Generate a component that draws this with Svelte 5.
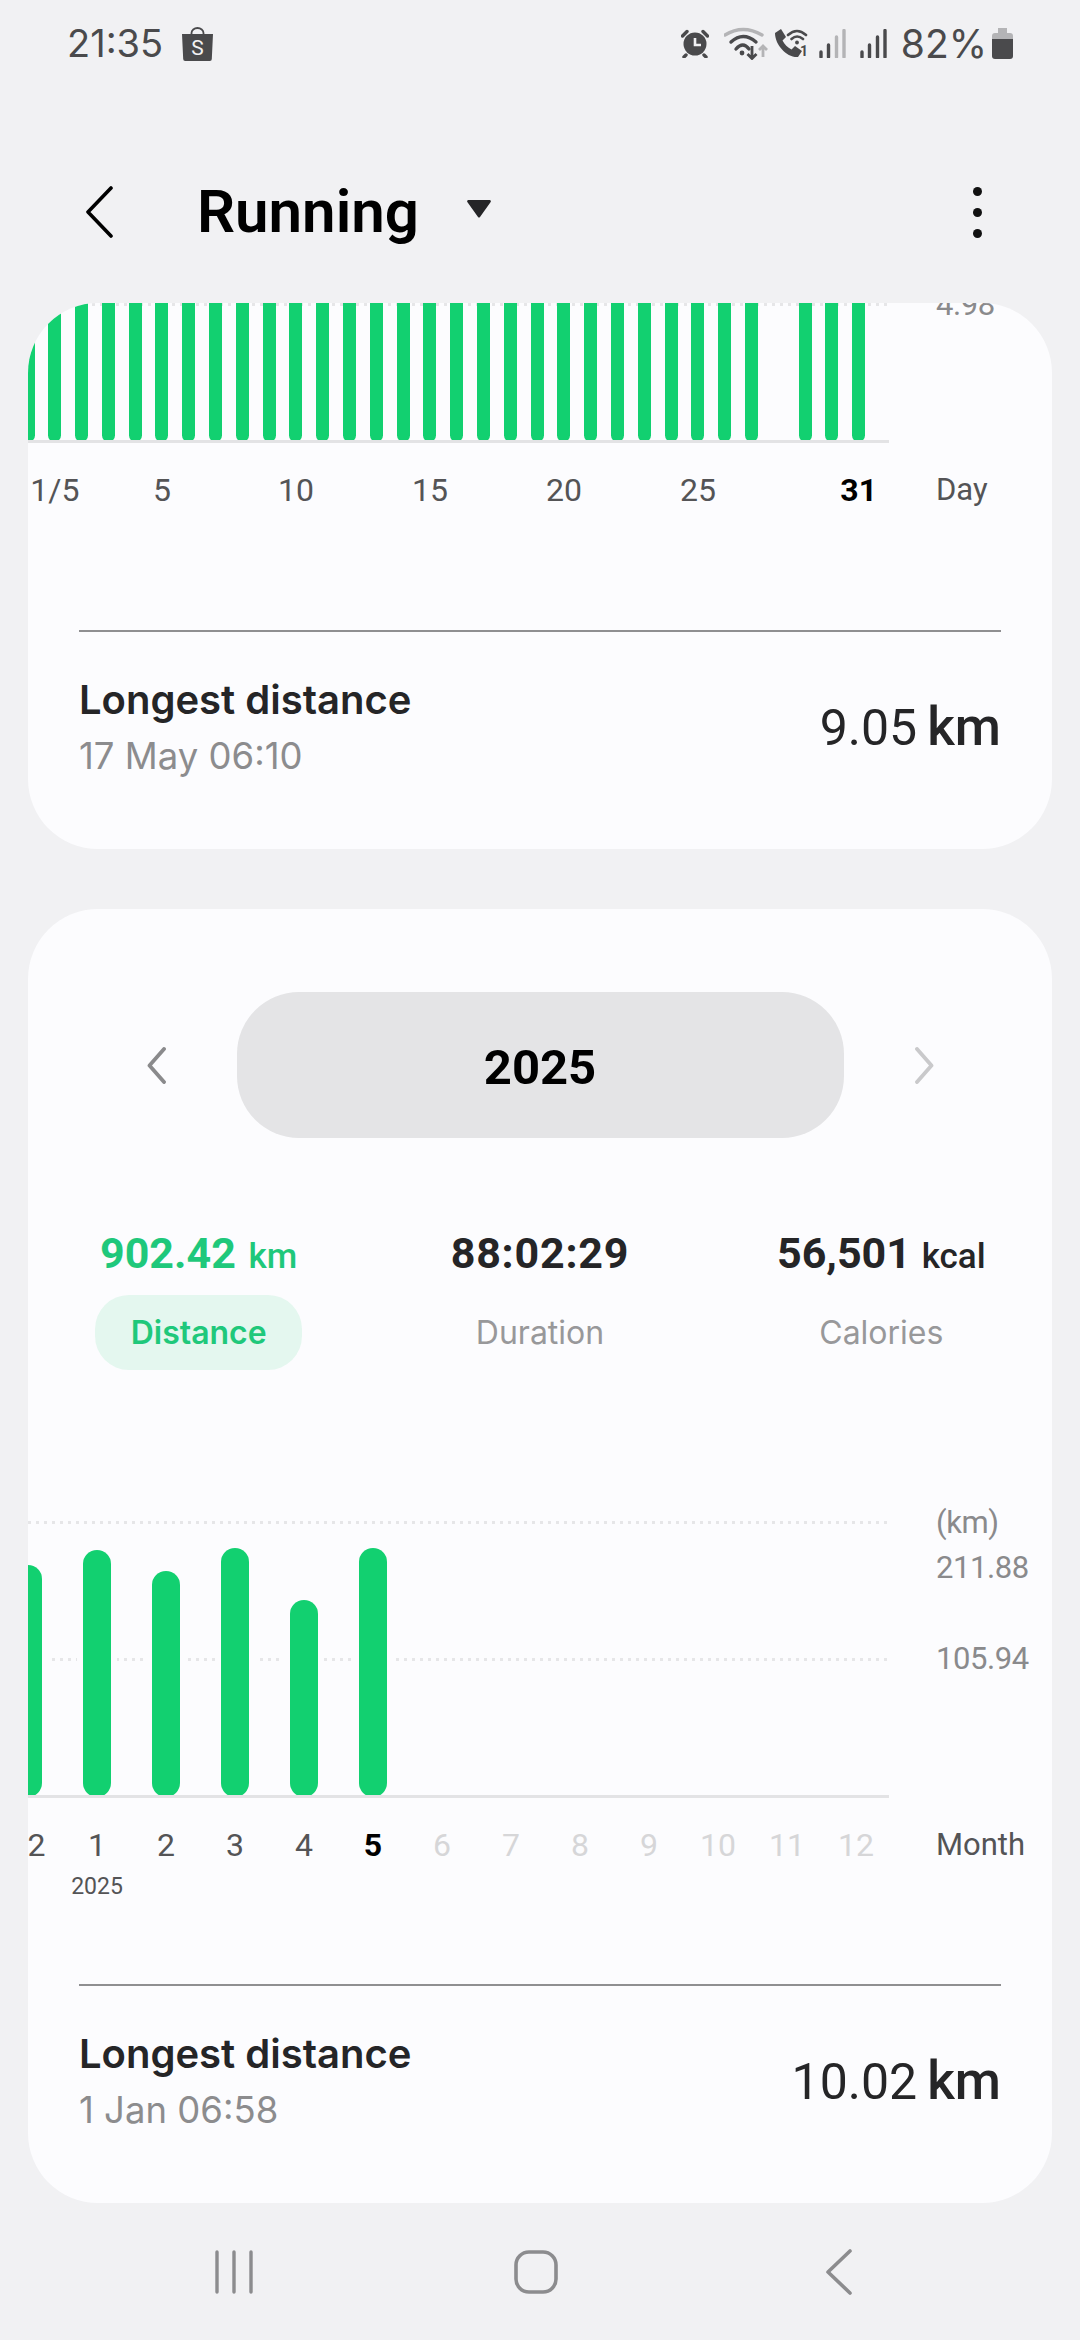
<script>
    // bar heights are px above the baseline, day 0 is the tail of the previous month
    const missingDays = [28];
    const dayLabels = { 1: "1/5", 5: "5", 10: "10", 15: "15", 20: "20", 25: "25", 31: "31" };
    const days = Array.from({ length: 32 }, (_, i) => ({
        i,
        label: dayLabels[i] ?? "",
        empty: missingDays.includes(i),
    }));

    const months = [
        { label: "2", height: 232, first: true },
        { label: "1", height: 247, year: "2025" },
        { label: "2", height: 226 },
        { label: "3", height: 249 },
        { label: "4", height: 197 },
        { label: "5", height: 249, current: true },
        ...[6, 7, 8, 9, 10, 11, 12].map((m) => ({ label: String(m), height: 0, future: true })),
    ];
</script>

<div class="screen">
    <div class="status">
        <span class="time">21:35</span>
        <svg class="bag" width="31" height="34" viewBox="0 0 31 34">
            <path d="M9.500 9V6a6 5 0 0 1 12 0v3" fill="none" stroke="#4a4a4c" stroke-width="1.800" />
            <path d="M0 7h31l-1.200 25a2 2 0 0 1-2 2H3.200a2 2 0 0 1-2-2z" fill="#4a4a4c" />
            <text x="15.500" y="28" text-anchor="middle" font-size="21" font-family="Roboto, sans-serif" fill="#f1f1f3">S</text>
        </svg>
        <div class="status-right">
            <svg width="28" height="29" viewBox="0 0 28 29">
                <circle cx="14" cy="15" r="11.500" fill="#4a4a4c" />
                <path d="M14 9v7h6" fill="none" stroke="#f1f1f3" stroke-width="2.600" />
                <path d="M1.500 7 6 2.500M26.500 7 22 2.500M5 26l-2 2M23 26l2 2" stroke="#4a4a4c" stroke-width="3.400" stroke-linecap="round" />
            </svg>
            <svg class="wifi" width="45" height="33" viewBox="0 0 45 33">
                <path d="M1 8Q19-3 38 8" fill="none" stroke="#b4b4b6" stroke-width="3.400" stroke-linecap="round" />
                <path d="M7 15Q19 4 32 15M12 22Q19 14 25 22" fill="none" stroke="#4a4a4c" stroke-width="3.400" stroke-linecap="round" />
                <circle cx="18" cy="26" r="2.400" fill="#4a4a4c" />
                <path d="M28 19v12M23.500 27l4.500 4.500 4.500-4.500" fill="none" stroke="#4a4a4c" stroke-width="2.800" />
                <path d="M39 30V19M35 23l4-4 4 4" fill="none" stroke="#b4b4b6" stroke-width="2.800" />
            </svg>
            <svg class="call" width="36" height="34" viewBox="0 0 36 34">
                <path d="M2 7 8 3l5 8-3.500 3.500c2 4 5 7 9 9l3.500-3.500 7 5-4 6C14 32 2 19 2 7z" fill="#4a4a4c" />
                <path d="M15 9Q24 1 33 9M18.500 13Q24 8 30 13" fill="none" stroke="#4a4a4c" stroke-width="2.600" stroke-linecap="round" />
                <circle cx="24" cy="16.500" r="1.900" fill="#4a4a4c" />
                <text x="31" y="30" text-anchor="middle" font-size="14" font-weight="700" font-family="Roboto, sans-serif" fill="#4a4a4c">1</text>
            </svg>
            <svg class="signal" width="27" height="29" viewBox="0 0 27 29">
                <path d="M2 23v5M9.500 16v12" stroke="#4a4a4c" stroke-width="3.400" stroke-linecap="round" />
                <path d="M17.500 8v20M25 1.500V28" stroke="#b4b4b6" stroke-width="3.400" stroke-linecap="round" />
            </svg>
            <svg class="signal second" width="27" height="29" viewBox="0 0 27 29">
                <path d="M2 23v5M9.500 16v12M17.500 8v20M25 1.500V28" stroke="#4a4a4c" stroke-width="3.400" stroke-linecap="round" />
            </svg>
            <span class="pct">82%</span>
            <svg class="battery" width="21" height="31" viewBox="0 0 21 31">
                <path d="M6 0h9v5h3a3 3 0 0 1 3 3v3H0V8a3 3 0 0 1 3-3h3z" fill="#b4b4b6" />
                <path d="M0 11h21v17a3 3 0 0 1-3 3H3a3 3 0 0 1-3-3z" fill="#4a4a4c" />
            </svg>
        </div>
    </div>

    <header class="topbar">
        <svg class="back" width="27" height="52" viewBox="0 0 27 52">
            <path d="M25 2 2 26l23 24" fill="none" stroke="#000" stroke-width="3.600" stroke-linecap="round" stroke-linejoin="round" />
        </svg>
        <h1>Running</h1>
        <svg class="caret" width="24" height="18" viewBox="0 0 24 18">
            <path d="M1.500 0h21a1.300 1.300 0 0 1 1 2.200L13 17a1.300 1.300 0 0 1-2 0L.5 2.200A1.300 1.300 0 0 1 1.500 0z" fill="#252527" />
        </svg>
        <div class="kebab"><i></i><i></i><i></i></div>
    </header>

    <main class="cards">
        <section class="card monthly">
            <div class="chart">
                <div class="plot">
                    <div class="grid-line top-line"></div>
                    <div class="slots day-slots">
                        {#each days as d}
                            <div class="slot">
                                {#if !d.empty}<div class="bar day-bar"></div>{/if}
                            </div>
                        {/each}
                    </div>
                    <div class="baseline"></div>
                </div>
                <div class="y-axis"><span class="y-label clipped">4.98</span></div>
                <div class="slots ticks day-slots">
                    {#each days as d}
                        <div class="slot tick" class:current={d.i === 31}>{d.label}</div>
                    {/each}
                </div>
                <div class="unit">Day</div>
            </div>
            <div class="footer">
                <div>
                    <div class="f-title">Longest distance</div>
                    <div class="f-sub">17 May 06:10</div>
                </div>
                <div class="f-value">9.05<b>km</b></div>
            </div>
        </section>

        <section class="card yearly">
            <div class="year-nav">
                <svg width="19" height="37" viewBox="0 0 19 37">
                    <path d="M17 2 2.500 18.500 17 35" fill="none" stroke="#8a8a8c" stroke-width="3.800" stroke-linecap="round" stroke-linejoin="round" />
                </svg>
                <div class="year-pill">2025</div>
                <svg width="19" height="37" viewBox="0 0 19 37">
                    <path d="M2 2 16.500 18.500 2 35" fill="none" stroke="#c9c9cb" stroke-width="3.800" stroke-linecap="round" stroke-linejoin="round" />
                </svg>
            </div>

            <div class="stats">
                <div class="stat active">
                    <div class="stat-value">902.42 <small>km</small></div>
                    <div class="stat-label">Distance</div>
                </div>
                <div class="stat">
                    <div class="stat-value clock">88:02:29</div>
                    <div class="stat-label">Duration</div>
                </div>
                <div class="stat">
                    <div class="stat-value">56,501 <small>kcal</small></div>
                    <div class="stat-label">Calories</div>
                </div>
            </div>

            <div class="chart year-chart">
                <div class="plot">
                    <div class="grid-line line-max"></div>
                    <div class="grid-line line-mid"></div>
                    <div class="slots month-slots">
                        {#each months as m}
                            <div class="slot">
                                {#if m.height}<div class="bar month-bar" style="height: {m.height}px"></div>{/if}
                            </div>
                        {/each}
                    </div>
                    <div class="baseline"></div>
                </div>
                <div class="y-axis">
                    <span class="y-label">(km)</span>
                    <span class="y-label max">211.88</span>
                    <span class="y-label mid">105.94</span>
                </div>
                <div class="slots ticks month-slots">
                    {#each months as m}
                        <div class="slot tick" class:current={m.current} class:future={m.future} class:first={m.first}>
                            {m.label}
                            {#if m.year}<span class="tick-year">{m.year}</span>{/if}
                        </div>
                    {/each}
                </div>
                <div class="unit">Month</div>
            </div>

            <div class="footer">
                <div>
                    <div class="f-title">Longest distance</div>
                    <div class="f-sub">1 Jan 06:58</div>
                </div>
                <div class="f-value">10.02<b>km</b></div>
            </div>
        </section>
    </main>

    <nav class="softkeys">
        <svg width="40" height="44" viewBox="0 0 40 44">
            <path d="M3 2v40M20 2v40M37 2v40" stroke="#8c8c8e" stroke-width="3.400" stroke-linecap="round" />
        </svg>
        <svg class="home" width="44" height="44" viewBox="0 0 44 44">
            <rect x="2" y="2" width="40" height="40" rx="13" fill="none" stroke="#8c8c8e" stroke-width="3.600" />
        </svg>
        <svg class="nav-back" width="26" height="46" viewBox="0 0 26 46">
            <path d="M24 2 2 23l22 21" fill="none" stroke="#8c8c8e" stroke-width="3.600" stroke-linecap="round" stroke-linejoin="round" />
        </svg>
    </nav>
</div>

<style>
:global(body) {
    margin: 0;
    background: #f1f1f3;
}

.screen {
    width: 1080px;
    height: 2340px;
    overflow: hidden;
    display: flex;
    flex-direction: column;
    background: #f1f1f3;
    font-family: Roboto, "Liberation Sans", sans-serif;
}

svg {
    display: block;
    flex-shrink: 0;
}

/* status bar */
.status {
    height: 86px;
    flex-shrink: 0;
    display: flex;
    align-items: center;
    padding: 0 67px 0 67px;
    color: #4a4a4c;
    font-size: 38px;
    font-family: Inter, Roboto, sans-serif;
}

.bag {
    margin-left: 19px;
    margin-top: 2px;
}

.status-right {
    margin-left: auto;
    display: flex;
    align-items: center;
}

.wifi {
    margin-left: 15px;
}

.call {
    margin-left: 4px;
}

.signal {
    margin-left: 10px;
}

.signal.second {
    margin-left: 14px;
}

.pct {
    margin-left: 14px;
    margin-right: 5px;
    font-size: 39px;
}

/* title bar */
.topbar {
    height: 217px;
    flex-shrink: 0;
    box-sizing: border-box;
    padding: 35px 0 0 86px;
    display: flex;
    align-items: center;
}

h1 {
    margin: 0 0 0 84px;
    font-size: 60px;
    font-weight: 600;
    color: #000;
    line-height: 1;
}

.caret {
    margin-left: 48px;
    margin-top: -6px;
}

.kebab {
    margin-left: auto;
    margin-right: 98px;
    display: flex;
    flex-direction: column;
    gap: 12px;
}

.kebab i {
    display: block;
    width: 9px;
    height: 9px;
    border-radius: 50%;
    background: #111;
}

/* cards */
.cards {
    height: 1900px;
    flex-shrink: 0;
    margin: 0 28px;
    display: flex;
    flex-direction: column;
    gap: 60px;
    overflow: hidden;
}

.card {
    background: #fcfcfe;
    border-radius: 70px;
    overflow: hidden;
    flex-shrink: 0;
}

.yearly {
    padding-top: 83px;
}

/* charts */
.chart {
    display: grid;
    grid-template-columns: 861px 1fr;
    column-gap: 47px;
    row-gap: 27px;
}

.monthly .chart {
    margin-top: -18px;
    padding-bottom: 120px;
}

.year-chart {
    margin-top: 133px;
    padding-bottom: 82px;
}

.plot {
    position: relative;
    height: 158px;
}

.year-chart .plot {
    height: 295px;
}

.slots {
    display: flex;
    align-items: flex-end;
    height: 100%;
}

.slots.ticks {
    align-items: flex-start;
    height: auto;
}

.day-slots {
    margin-left: -13.4px;
}

.month-slots {
    margin-left: -34.5px;
}

.slot {
    flex: none;
    box-sizing: border-box;
    display: flex;
    flex-direction: column;
    align-items: center;
    justify-content: flex-end;
    white-space: nowrap;
}

.day-slots .slot {
    width: 26.8px;
}

.month-slots .slot {
    width: 69px;
}

.bar {
    background: #12d070;
    position: relative;
}

.day-bar {
    width: 13px;
    height: 157px;
    margin-bottom: 1px;
    border-radius: 0 0 6.5px 6.5px;
}

.month-bar {
    width: 28px;
    margin-bottom: 1px;
    border-radius: 14px;
    box-shadow: 0 0 0 6px #fcfcfe;
}

.grid-line {
    position: absolute;
    left: 0;
    right: 0;
    height: 3px;
    background: repeating-linear-gradient(90deg, #e6e6e8 0 3px, transparent 3px 8px);
}

.top-line {
    top: 18px;
}

.line-max {
    top: 18px;
}

.line-mid {
    top: 155px;
}

.baseline {
    position: absolute;
    left: 0;
    right: 0;
    bottom: 0;
    height: 3px;
    background: #e3e3e5;
}

.y-axis {
    display: flex;
    flex-direction: column;
}

.y-label {
    font-size: 31px;
    line-height: 40px;
    color: #8a8a8c;
    letter-spacing: -0.4px;
}

.y-label.max {
    margin-top: 5px;
}

.y-label.mid {
    margin-top: 51px;
}

.tick {
    font-size: 32px;
    line-height: 40px;
    color: #545456;
}

.tick.current {
    color: #000;
    font-weight: 700;
}

.tick.future {
    color: #d6d6d8;
}

.tick.first {
    padding-left: 17px;
}

.tick-year {
    font-size: 23px;
    line-height: 30px;
    margin-top: 7px;
    color: #545456;
}

.unit {
    font-size: 31px;
    line-height: 40px;
    color: #545456;
}

/* footer row under each chart */
.footer {
    margin: 0 51px;
    border-top: 2px solid #8f8f91;
    padding: 48px 0 73px;
    display: flex;
    justify-content: space-between;
    align-items: center;
    font-family: Inter, Roboto, sans-serif;
}

.f-title {
    font-size: 40px;
    font-weight: 600;
    line-height: 40px;
    color: #252527;
}

.f-sub {
    margin-top: 16px;
    font-size: 36.5px;
    line-height: 40px;
    color: #8c8c8e;
}

.f-value {
    font-family: Roboto, sans-serif;
    font-size: 50px;
    line-height: 60px;
    color: #252527;
}

.f-value b {
    margin-left: 10px;
    font-size: 53px;
    line-height: 0;
    font-weight: 500;
}

/* year selector and totals */
.year-nav {
    display: flex;
    justify-content: center;
    align-items: center;
    gap: 71px;
}

.year-pill {
    width: 607px;
    height: 146px;
    box-sizing: border-box;
    padding-top: 4px;
    border-radius: 62px;
    background: #e4e4e6;
    display: flex;
    align-items: center;
    justify-content: center;
    font-size: 49px;
    font-weight: 700;
    color: #000;
}

.stats {
    margin-top: 90px;
    display: grid;
    grid-template-columns: repeat(3, 1fr);
}

.stat {
    display: flex;
    flex-direction: column;
    align-items: center;
}

.stat-value {
    height: 50px;
    font-size: 43px;
    font-weight: 700;
    line-height: 50px;
    color: #252527;
    white-space: nowrap;
}

.stat-value.clock {
    letter-spacing: 0.8px;
}

.stat-value small {
    font-size: 35px;
    font-weight: 500;
    line-height: 0;
}

.stat-label {
    margin-top: 17px;
    height: 75px;
    width: 207px;
    box-sizing: border-box;
    border-radius: 34px;
    display: flex;
    align-items: center;
    justify-content: center;
    font-family: Inter, Roboto, sans-serif;
    font-size: 32px;
    color: #98989a;
}

.stat.active .stat-value {
    color: #1fc87b;
}

.stat.active small {
    margin-left: 2px;
}

.stat.active .stat-label {
    background: #e4f7ef;
    color: #1fc87b;
    font-weight: 600;
}

/* system navigation */
.softkeys {
    flex: 1;
    display: flex;
    align-items: center;
    padding-left: 214px;
}

.home {
    margin-left: 260px;
}

.nav-back {
    margin-left: 268px;
}
</style>
